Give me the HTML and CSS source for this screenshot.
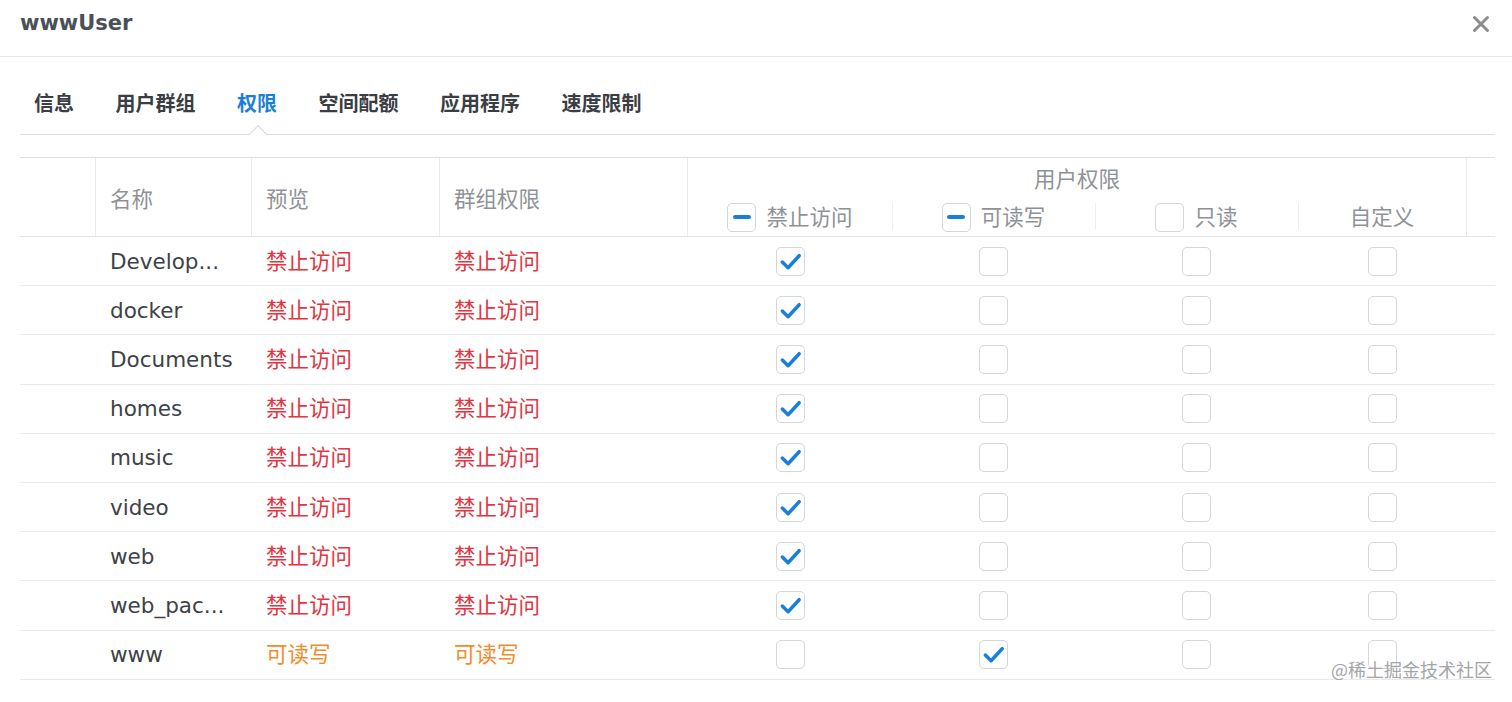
FILE: index.html
```html
<!DOCTYPE html>
<html lang="zh-CN">
<head>
<meta charset="utf-8">
<title>wwwUser</title>
<link rel="stylesheet" href="styles.css">
</head>
<body>
<div class="window">
  <div class="titlebar">
    <div class="title">wwwUser</div>
    <div class="close">
      <svg width="18" height="18" viewBox="0 0 18 18"><path d="M2.5 2.5 L15.5 15.5 M15.5 2.5 L2.5 15.5" stroke="#8c8c8c" stroke-width="3" stroke-linecap="round"/></svg>
    </div>
  </div>

  <div class="tabs">
    <div class="tab">信息</div>
    <div class="tab">用户群组</div>
    <div class="tab active">权限</div>
    <div class="tab">空间配额</div>
    <div class="tab">应用程序</div>
    <div class="tab">速度限制</div>
  </div>

  <div class="table">
    <div class="thead">
      <div class="th th-blank"></div>
      <div class="th">名称</div>
      <div class="th">预览</div>
      <div class="th">群组权限</div>
      <div class="th-group">用户权限</div>
      <div class="th-sub sep"><span class="cb"><span class="minus"></span></span>禁止访问</div>
      <div class="th-sub sep"><span class="cb"><span class="minus"></span></span>可读写</div>
      <div class="th-sub sep"><span class="cb"></span>只读</div>
      <div class="th-sub last">自定义</div>
      <div class="th-end"></div>
    </div>

    <div class="row">
      <div></div><div class="name">Develop...</div><div class="deny">禁止访问</div><div class="deny">禁止访问</div>
      <div class="cc"><span class="cb"><svg viewBox="0 0 28 28"><path d="M5.5 14.5 L11.5 20.5 L23 8"/></svg></span></div>
      <div class="cc"><span class="cb"></span></div><div class="cc"><span class="cb"></span></div><div class="cc"><span class="cb"></span></div><div></div>
    </div>
    <div class="row">
      <div></div><div class="name">docker</div><div class="deny">禁止访问</div><div class="deny">禁止访问</div>
      <div class="cc"><span class="cb"><svg viewBox="0 0 28 28"><path d="M5.5 14.5 L11.5 20.5 L23 8"/></svg></span></div>
      <div class="cc"><span class="cb"></span></div><div class="cc"><span class="cb"></span></div><div class="cc"><span class="cb"></span></div><div></div>
    </div>
    <div class="row">
      <div></div><div class="name">Documents</div><div class="deny">禁止访问</div><div class="deny">禁止访问</div>
      <div class="cc"><span class="cb"><svg viewBox="0 0 28 28"><path d="M5.5 14.5 L11.5 20.5 L23 8"/></svg></span></div>
      <div class="cc"><span class="cb"></span></div><div class="cc"><span class="cb"></span></div><div class="cc"><span class="cb"></span></div><div></div>
    </div>
    <div class="row">
      <div></div><div class="name">homes</div><div class="deny">禁止访问</div><div class="deny">禁止访问</div>
      <div class="cc"><span class="cb"><svg viewBox="0 0 28 28"><path d="M5.5 14.5 L11.5 20.5 L23 8"/></svg></span></div>
      <div class="cc"><span class="cb"></span></div><div class="cc"><span class="cb"></span></div><div class="cc"><span class="cb"></span></div><div></div>
    </div>
    <div class="row">
      <div></div><div class="name">music</div><div class="deny">禁止访问</div><div class="deny">禁止访问</div>
      <div class="cc"><span class="cb"><svg viewBox="0 0 28 28"><path d="M5.5 14.5 L11.5 20.5 L23 8"/></svg></span></div>
      <div class="cc"><span class="cb"></span></div><div class="cc"><span class="cb"></span></div><div class="cc"><span class="cb"></span></div><div></div>
    </div>
    <div class="row">
      <div></div><div class="name">video</div><div class="deny">禁止访问</div><div class="deny">禁止访问</div>
      <div class="cc"><span class="cb"><svg viewBox="0 0 28 28"><path d="M5.5 14.5 L11.5 20.5 L23 8"/></svg></span></div>
      <div class="cc"><span class="cb"></span></div><div class="cc"><span class="cb"></span></div><div class="cc"><span class="cb"></span></div><div></div>
    </div>
    <div class="row">
      <div></div><div class="name">web</div><div class="deny">禁止访问</div><div class="deny">禁止访问</div>
      <div class="cc"><span class="cb"><svg viewBox="0 0 28 28"><path d="M5.5 14.5 L11.5 20.5 L23 8"/></svg></span></div>
      <div class="cc"><span class="cb"></span></div><div class="cc"><span class="cb"></span></div><div class="cc"><span class="cb"></span></div><div></div>
    </div>
    <div class="row">
      <div></div><div class="name">web_pac...</div><div class="deny">禁止访问</div><div class="deny">禁止访问</div>
      <div class="cc"><span class="cb"><svg viewBox="0 0 28 28"><path d="M5.5 14.5 L11.5 20.5 L23 8"/></svg></span></div>
      <div class="cc"><span class="cb"></span></div><div class="cc"><span class="cb"></span></div><div class="cc"><span class="cb"></span></div><div></div>
    </div>
    <div class="row">
      <div></div><div class="name">www</div><div class="rw">可读写</div><div class="rw">可读写</div>
      <div class="cc"><span class="cb"></span></div>
      <div class="cc"><span class="cb"><svg viewBox="0 0 28 28"><path d="M5.5 14.5 L11.5 20.5 L23 8"/></svg></span></div>
      <div class="cc"><span class="cb"></span></div><div class="cc"><span class="cb"></span></div><div></div>
    </div>
  </div>

  <div class="watermark">@稀土掘金技术社区</div>
</div>
</body>
</html>
```

FILE: styles.css
```css
* { box-sizing: border-box; }

html, body {
  margin: 0;
  padding: 0;
  background: #ffffff;
}

body {
  font-family: "DejaVu Sans", "Noto Sans CJK SC", sans-serif;
  color: #3d4248;
}

.window {
  position: relative;
  width: 1512px;
  height: 702px;
  overflow: hidden;
}

.titlebar {
  height: 57px;
  border-bottom: 1px solid #e4e6e9;
  display: flex;
  justify-content: space-between;
  align-items: flex-start;
  padding: 9px 22px 0 20px;
}

.title {
  font-size: 21px;
  font-weight: 700;
  line-height: 28px;
  color: #4b5058;
}

.close {
  width: 18px;
  height: 18px;
  margin-top: 6px;
}

.close svg { display: block; }

.tabs {
  height: 78px;
  margin: 0 17px 0 20px;
  border-bottom: 1px solid #dcdfe3;
  display: flex;
  align-items: flex-end;
  gap: 41.5px;
  padding: 0 0 20px 14px;
  font-family: "Noto Sans CJK SC", sans-serif;
}

.tab {
  position: relative;
  font-size: 20px;
  font-weight: 700;
  line-height: 22px;
  color: #3a3e44;
}

.tab.active { color: #1b7fd9; }

.tab.active::after {
  content: "";
  position: absolute;
  left: 50%;
  bottom: -28px;
  width: 13px;
  height: 13px;
  margin-left: -6.5px;
  background: #ffffff;
  border-top: 1px solid #d6d9de;
  border-left: 1px solid #d6d9de;
  transform: rotate(45deg);
}

.table {
  margin: 22px 17px 0 20px;
  border-top: 1px solid #dcdfe3;
}

.thead, .row {
  display: grid;
  grid-template-columns: 76px 156px 188px 248px 204px 203px 203px 169px 28px;
}

.thead {
  grid-template-rows: 42px 36px;
  border-bottom: 1px solid #e3e5e8;
  color: #8e9297;
  font-size: 21.5px;
  font-family: "Noto Sans CJK SC", sans-serif;
}

.th {
  grid-row: 1 / 3;
  border-right: 1px solid #e8eaed;
  display: flex;
  align-items: center;
  padding: 1px 0 0 14px;
}

.th-blank { padding: 0; }

.th-group {
  grid-column: 5 / 9;
  grid-row: 1;
  border-right: 1px solid #e8eaed;
  display: flex;
  justify-content: center;
  align-items: center;
  padding-bottom: 4px;
}

.th-sub {
  grid-row: 2;
  position: relative;
  display: flex;
  justify-content: center;
  align-items: center;
  gap: 10px;
  padding-bottom: 5px;
}

.th-sub .cb { margin-top: 3px; }

.th-sub.sep::after {
  content: "";
  position: absolute;
  right: -1px;
  top: 3px;
  bottom: 6px;
  width: 1px;
  background: #eceef0;
}

.th-sub.last { border-right: 1px solid #e8eaed; }

.th-end { grid-column: 9; grid-row: 1 / 3; }

.row {
  height: 49.2px;
  border-bottom: 1px solid #e8eaed;
  font-size: 21.5px;
  align-items: center;
}

.name {
  padding-left: 14px;
  color: #3d4248;
  white-space: nowrap;
}

.deny, .rw {
  padding: 0 0 4px 14px;
  font-family: "Noto Sans CJK SC", sans-serif;
}

.deny { color: #e2353f; }
.rw { color: #f28b2a; }

.cc {
  display: flex;
  justify-content: center;
  align-items: center;
}

.cb {
  width: 29px;
  height: 29px;
  border: 1px solid #d3d6da;
  border-radius: 5px;
  background: #ffffff;
  display: inline-flex;
  justify-content: center;
  align-items: center;
  flex: none;
}

.cb svg {
  width: 27px;
  height: 27px;
  display: block;
}

.cb svg path {
  fill: none;
  stroke: #1a7fdc;
  stroke-width: 3.6;
  stroke-linecap: round;
  stroke-linejoin: round;
}

.minus {
  width: 18px;
  height: 3.5px;
  border-radius: 2px;
  background: #1a7fdc;
}

.watermark {
  position: absolute;
  right: 20px;
  top: 657px;
  font-family: "Noto Sans CJK SC", sans-serif;
  font-size: 18px;
  line-height: 24px;
  color: #a3a5a8;
}
```
